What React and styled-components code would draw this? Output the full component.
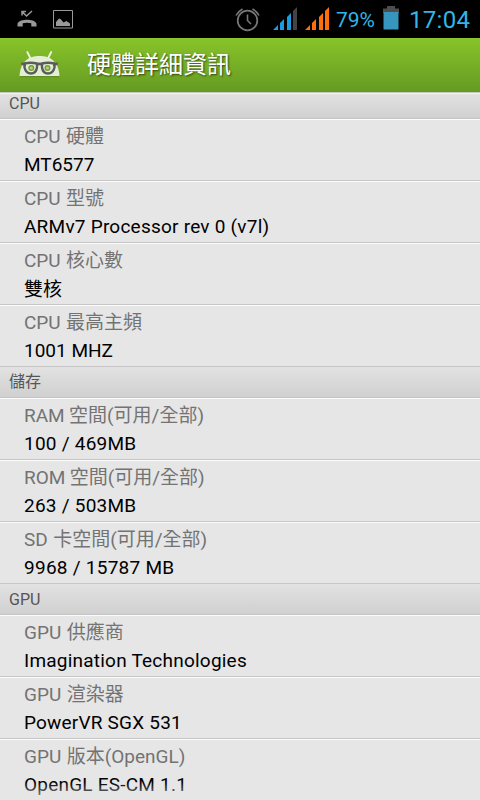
import React from 'react';
import styled, { createGlobalStyle } from 'styled-components';

const GlobalStyle = createGlobalStyle`
  * {
    box-sizing: border-box;
  }

  body {
    margin: 0;
    background: #000;
    font-family: Roboto, 'Noto Sans CJK TC', sans-serif;
  }
`;

const Screen = styled.div`
  display: flex;
  flex-direction: column;
  width: 480px;
  height: 800px;
  overflow: hidden;
  background: #e6e6e6;
`;

const StatusBar = styled.header`
  display: flex;
  flex: none;
  justify-content: space-between;
  height: 38px;
  padding: 0 10px 0 16px;
  background: #000;
  color: #33b5e5;
`;

const StatusGroup = styled.div`
  display: flex;
  align-items: flex-start;
`;

const StatusIcon = styled.svg`
  flex: none;
  margin: ${(props) => props.$top}px ${(props) => props.$gap}px 0 0;
`;

const StatusText = styled.span`
  flex: none;
  width: ${(props) => props.$width}px;
  font-size: ${(props) => props.$size}px;
  line-height: 40px;
  letter-spacing: ${(props) => props.$spacing}px;
  white-space: nowrap;
`;

const ActionBar = styled.div`
  display: flex;
  flex: none;
  align-items: center;
  height: 54px;
  padding-left: 19px;
  background: linear-gradient(#88c42a, #659a22);
`;

const Title = styled.h1`
  margin: 0 0 0 27px;
  color: #fff;
  font-size: 24px;
  font-weight: 400;
  line-height: 54px;
  text-shadow: 1px 1px 2px rgba(0, 0, 0, 0.6);
`;

const List = styled.main`
  position: relative;
  flex: 1;
  min-height: 0;
  overflow: hidden;

  /* fading edge */
  &::after {
    content: '';
    position: absolute;
    right: 0;
    bottom: 0;
    left: 0;
    height: 18px;
    background: linear-gradient(rgba(230, 230, 230, 0), rgba(230, 230, 230, 0.7));
  }
`;

const SectionTitle = styled.h2`
  height: ${(props) => (props.$clipped ? 27 : 31)}px;
  margin: 0;
  padding-left: 9px;
  background: linear-gradient(#e2e2e2, #d0d0d0);
  border-top: ${(props) => (props.$clipped ? '1px solid #c2c8bb' : 'none')};
  border-bottom: 1px solid #c4c4c4;
  box-shadow: ${(props) => (props.$clipped ? 'inset 0 1px #f4f4f4' : 'none')};
  color: #555;
  font-size: 16px;
  font-weight: 400;
  line-height: ${(props) => (props.$clipped ? 22 : props.$lineHeight || 31)}px;
`;

const Row = styled.div`
  height: 62px;
  padding: 3px 0 0 24px;
  background: #e6e6e6;
  border-top: 1px solid #fcfcfc;
  border-bottom: 1px solid #c6c6c6;
`;

const Label = styled.div`
  height: 28px;
  color: #737373;
  font-size: 19px;
  line-height: 28px;
  word-spacing: ${(props) => props.$wordSpacing || 0}px;
  white-space: nowrap;
`;

const Value = styled(Label)`
  color: #000;
  line-height: ${(props) => props.$lineHeight || 28}px;
  letter-spacing: ${(props) => props.$spacing || 0}px;
`;

const MissedCallIcon = () => (
  <StatusIcon $top={10} $gap={15} width="22" height="18" viewBox="0 0 22 18">
    <path d="M6 5.5V1.5h4M6 1.5l4.5 4.5L16 1" fill="none" stroke="#999" strokeWidth="1.5" />
    <path
      d="M1.5 16.5v-3C3 10.5 7 9.7 11 9.7s8 .8 9.5 3.8v3h-5.2v-3.2c-2.5-.9-6.1-.9-8.6 0v3.2z"
      fill="#999"
    />
  </StatusIcon>
);

const PictureIcon = () => (
  <StatusIcon $top={10} $gap={0} width="20" height="19" viewBox="0 0 20 19">
    <path d="M.5.5h19v17.5H.5z" fill="none" stroke="#999" />
    <path d="M3 16v-4l3-3.5 1.5.5 3 3.5 3-1.5 3.5 2.5V16z" fill="#999" />
  </StatusIcon>
);

const AlarmIcon = () => (
  <StatusIcon $top={7} $gap={13} width="25" height="25" viewBox="0 0 25 25" fill="none" stroke="#777">
    <circle cx="12.5" cy="13.5" r="9.8" strokeWidth="1.7" />
    <path d="M12.5 7.5v6l3.5 3.5M1 8.5Q3 4.5 7.5 2M24 8.5Q22 4.5 17.5 2" strokeWidth="1.6" />
  </StatusIcon>
);

const SignalIcon = ({ color, last, gap }) => (
  <StatusIcon $top={7} $gap={gap} width="24" height="23" viewBox="0 0 24 23">
    <path d="M0 23l5-5v5zM7 23v-7l4-4v11zM14 23V10l4-4v17z" fill={color} />
    <path d="M20 23V4l4-4v23z" fill={last} />
  </StatusIcon>
);

const BatteryIcon = () => (
  <StatusIcon $top={6} $gap={10} width="16" height="24" viewBox="0 0 16 24">
    <path d="M4 0h8v2.5h4V7H0V2.5h4z" fill="#4d4d4d" />
    <path d="M.5 6h15v17.5H.5z" fill="#3696bd" />
  </StatusIcon>
);

const AppLogo = () => (
  <svg width="41" height="30" viewBox="0 0 41 30">
    <path d="M1 26.5h39" stroke="#4f7b1c" strokeWidth="1.5" opacity=".5" />
    <path d="M8.3 2l3 6M32.2 2l-3 6" stroke="#edf5e2" strokeWidth="1.8" strokeLinecap="round" />
    <path d="M.5 26C1.5 11 10 6 20.5 6S39.5 11 40.5 26z" fill="#e4eed6" />
    <circle cx="12.3" cy="18" r="2.3" fill="#b5cd94" stroke="#70a529" strokeWidth="1.5" />
    <circle cx="28.5" cy="18" r="2.3" fill="#b5cd94" stroke="#70a529" strokeWidth="1.5" />
    <path
      d="M5.5 13.5q6-1.5 12.5 0v4q-1 6-6 6t-6.5-6zM23 13.5q6-1.5 12.5 0v4q-1.5 6-6.5 6t-6-6z"
      fill="none"
      stroke="#5a5d5c"
      strokeWidth="2.4"
      strokeLinejoin="round"
    />
    <path d="M2 12.5l5 .5v3l-4.5-1zM39 12.5l-5 .5v3l4.500-1zM17 13q3.5-1 7 0v3q-3.5-1.5-7 0z" fill="#5a5d5c" />
  </svg>
);

const sections = [
  {
    title: 'CPU',
    clipped: true,
    items: [
      { label: 'CPU 硬體', value: 'MT6577' },
      { label: 'CPU 型號', value: 'ARMv7 Processor rev 0 (v7l)', spacing: 0.23 },
      { label: 'CPU 核心數', value: '雙核', lineHeight: 30 },
      { label: 'CPU 最高主頻', value: '1001 MHZ' },
    ],
  },
  {
    title: '儲存',
    lineHeight: 29,
    items: [
      { label: 'RAM 空間(可用/全部)', value: '100 / 469MB', spacing: 0.24, wordSpacing: -0.3 },
      { label: 'ROM 空間(可用/全部)', value: '263 / 503MB', spacing: 0.24, wordSpacing: -0.3 },
      { label: 'SD 卡空間(可用/全部)', value: '9968 / 15787 MB', spacing: 0.26 },
    ],
  },
  {
    title: 'GPU',
    items: [
      { label: 'GPU 供應商', value: 'Imagination Technologies', spacing: 0.22 },
      { label: 'GPU 渲染器', value: 'PowerVR SGX 531', spacing: 0.2 },
      { label: 'GPU 版本(OpenGL)', value: 'OpenGL ES-CM 1.1', spacing: 0.22 },
    ],
  },
];

const App = () => (
  <>
    <GlobalStyle />
    <Screen>
      <StatusBar>
        <StatusGroup>
          <MissedCallIcon />
          <PictureIcon />
        </StatusGroup>
        <StatusGroup>
          <AlarmIcon />
          <SignalIcon color="#1b9be0" last="#444" gap={8} />
          <SignalIcon color="#ff6d0d" last="#ff6d0d" gap={7} />
          <StatusText $width={47} $size={21} $spacing={0}>
            79%
          </StatusText>
          <BatteryIcon />
          <StatusText $width={61} $size={24} $spacing={0.3}>
            17:04
          </StatusText>
        </StatusGroup>
      </StatusBar>
      <ActionBar>
        <AppLogo />
        <Title>硬體詳細資訊</Title>
      </ActionBar>
      <List>
        {sections.map((section) => (
          <section key={section.title}>
            <SectionTitle $clipped={section.clipped} $lineHeight={section.lineHeight}>
              {section.title}
            </SectionTitle>
            {section.items.map((item) => (
              <Row key={item.label}>
                <Label $wordSpacing={item.wordSpacing ?? 0.7}>{item.label}</Label>
                <Value $spacing={item.spacing} $lineHeight={item.lineHeight}>
                  {item.value}
                </Value>
              </Row>
            ))}
          </section>
        ))}
      </List>
    </Screen>
  </>
);

export default App;
